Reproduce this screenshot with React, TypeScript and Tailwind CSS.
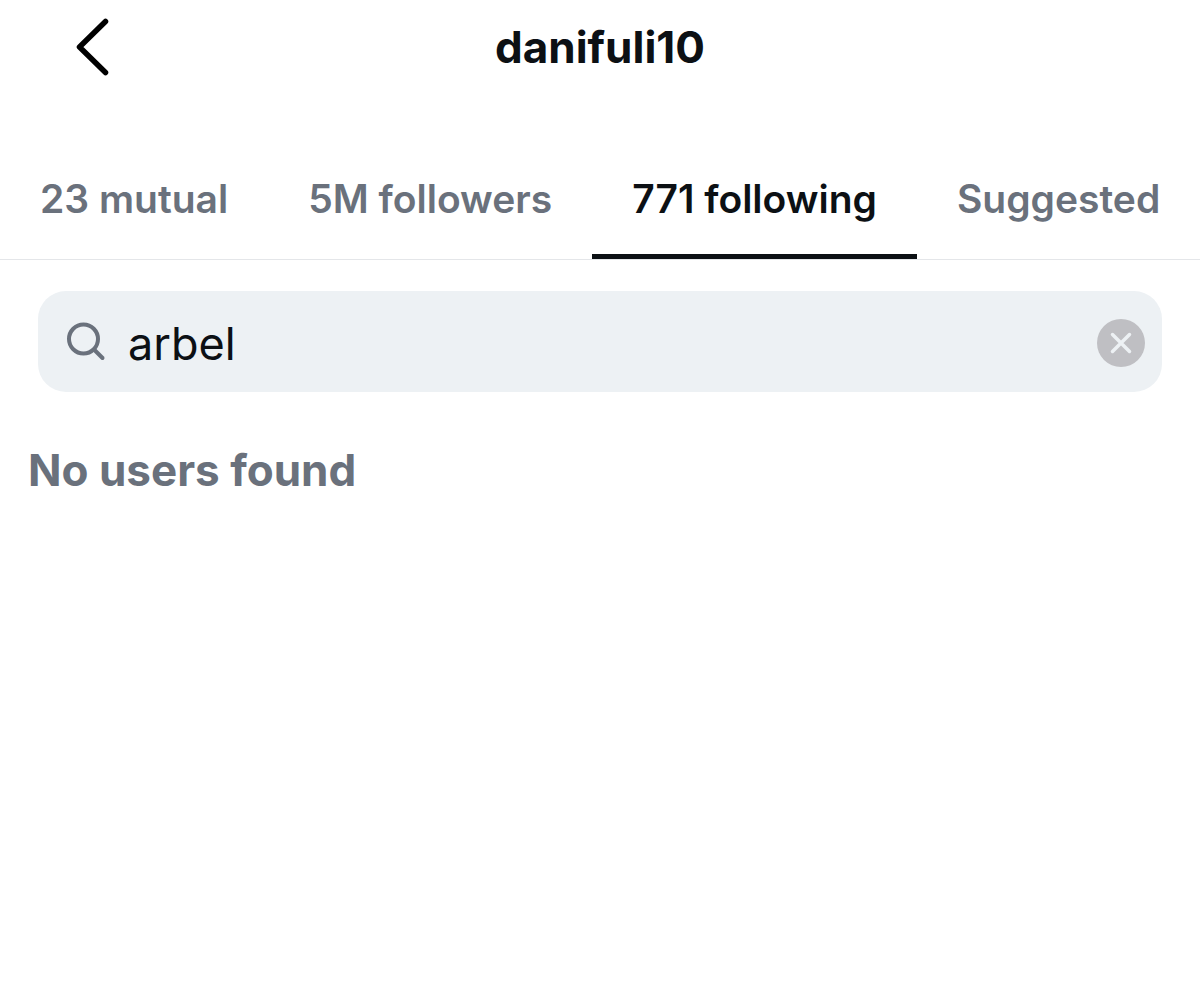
import React, { useState } from 'react';

const TABS = ['23 mutual', '5M followers', '771 following', 'Suggested'];

const App: React.FC = () => {
  const [activeTab, setActiveTab] = useState('771 following');
  const [query, setQuery] = useState('arbel');

  return (
    <div className="min-h-screen bg-white font-['Inter',sans-serif] text-[#0c1014]">
      {/* Header */}
      <header className="grid grid-cols-[1fr_auto_1fr] items-center h-[94px] px-[72px]">
        <button type="button" aria-label="Back" className="justify-self-start">
          <svg width="40" height="60" viewBox="0 0 40 60" fill="none" stroke="black" strokeWidth="5.5" strokeLinecap="round" strokeLinejoin="round">
            <path d="M33.5 4.5L7.5 30L33.5 55.5" />
          </svg>
        </button>
        <h1 className="text-[44px] leading-none font-bold">danifuli10</h1>
      </header>

      {/* Tabs */}
      <nav className="flex justify-between mt-[46px] border-b border-[#e4e6e9]">
        {TABS.map((tab) => (
          <button
            key={tab}
            type="button"
            onClick={() => setActiveTab(tab)}
            className={`h-[119px] px-10 pt-[3px] border-b-[5px] text-[39px] leading-none font-semibold whitespace-nowrap ${
              tab === activeTab ? 'border-[#0c1014] text-[#0c1014]' : 'border-transparent text-[#6a717c]'
            }`}
          >
            {tab}
          </button>
        ))}
      </nav>

      {/* Search */}
      <div className="flex items-center mx-[38px] mt-[31px] h-[101px] pt-[3px] pl-7 pr-[17px] rounded-[28px] bg-[#edf1f4]">
        <svg width="42" height="42" viewBox="0 0 42 42" fill="none" stroke="#6a717c" strokeWidth="4" strokeLinecap="round" aria-hidden="true">
          <circle cx="17.5" cy="17" r="14.5" />
          <path d="M28.5 28L36.5 36" />
        </svg>
        <input
          type="text"
          aria-label="Search"
          value={query}
          onChange={(e) => setQuery(e.target.value)}
          className="grow min-w-0 ml-5 bg-transparent text-[45px] leading-none outline-none"
        />
        <button type="button" aria-label="Clear search" onClick={() => setQuery('')}>
          <svg width="48" height="48" viewBox="0 0 48 48" fill="none">
            <circle cx="24" cy="24" r="24" fill="#bfbfc3" />
            <path d="M15.5 15.5L32.5 32.5M32.5 15.5L15.5 32.5" stroke="#edf1f4" strokeWidth="3.5" strokeLinecap="round" />
          </svg>
        </button>
      </div>

      <p className="mt-14 px-7 text-[44px] leading-none font-bold text-[#6a717c]">No users found</p>
    </div>
  );
};

export default App;
